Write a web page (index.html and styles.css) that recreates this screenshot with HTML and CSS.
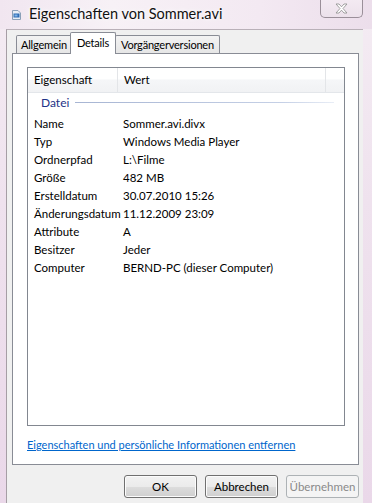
FILE: index.html
```html
<!DOCTYPE html>
<html lang="de">
<head>
  <meta charset="UTF-8">
  <meta name="viewport" content="width=device-width, initial-scale=1.0">
  <title>Eigenschaften von Sommer.avi</title>
  <link rel="stylesheet" href="styles.css">
</head>
<body>
  <div class="window">
    <div class="titlebar">
      <svg class="app-icon" width="9" height="10" viewBox="0 0 9 10">
        <path d="M0.5 0.5h5.5l2.5 2.5v6.5h-8z" fill="#e8eef5" stroke="#8aa0b8"/>
        <rect x="1.5" y="3.5" width="6" height="4" fill="#2f6db5"/>
        <rect x="2.5" y="4.5" width="3" height="2" fill="#7fb4e8"/>
      </svg>
      <span class="title">Eigenschaften von Sommer.avi</span>
      <div class="close-btn">
        <svg width="13" height="11" viewBox="0 0 13 11">
          <path d="M1 1h3l2.5 2.8L9 1h3L8 5.5l4 4.5H9L6.5 7.2 4 10H1l4-4.5z" fill="#fff" stroke="#8c8c8c" stroke-width="0.8" stroke-linejoin="round"/>
        </svg>
      </div>
    </div>

    <div class="dialog">
      <div class="tabs">
        <div class="tab">Allgemein</div>
        <div class="tab active">Details</div>
        <div class="tab">Vorgängerversionen</div>
      </div>

      <div class="panel">
        <div class="listview">
          <div class="lv-header">
            <div class="lv-col col-name">Eigenschaft</div>
            <div class="lv-col col-value">Wert</div>
            <div class="lv-col col-rest"></div>
          </div>
          <div class="lv-group">
            <span>Datei</span>
            <div class="group-line"></div>
          </div>
          <div class="lv-row"><span class="lbl">Name</span><span>Sommer.avi.divx</span></div>
          <div class="lv-row"><span class="lbl">Typ</span><span>Windows Media Player</span></div>
          <div class="lv-row"><span class="lbl">Ordnerpfad</span><span>L:\Filme</span></div>
          <div class="lv-row"><span class="lbl">Größe</span><span>482 MB</span></div>
          <div class="lv-row"><span class="lbl">Erstelldatum</span><span>30.07.2010 15:26</span></div>
          <div class="lv-row"><span class="lbl">Änderungsdatum</span><span>11.12.2009 23:09</span></div>
          <div class="lv-row"><span class="lbl">Attribute</span><span>A</span></div>
          <div class="lv-row"><span class="lbl">Besitzer</span><span>Jeder</span></div>
          <div class="lv-row"><span class="lbl">Computer</span><span>BERND-PC (dieser Computer)</span></div>
        </div>
        <a class="remove-link" href="#">Eigenschaften und persönliche Informationen entfernen</a>
      </div>

      <div class="buttons">
        <button class="btn">OK</button>
        <button class="btn">Abbrechen</button>
        <button class="btn" disabled>Übernehmen</button>
      </div>
    </div>
  </div>
</body>
</html>
```

FILE: styles.css
```css
/* Fenster */
body {
  margin: 0;
  width: 372px;
  height: 503px;
  overflow: hidden;
  font-family: Lato, "Noto Sans", sans-serif;
  font-size: 11.5px;
  color: #000;
  background: linear-gradient(180deg, #f4ecf3 0%, #efe2ee 40%, #ead8e9 100%);
}

.window {
  display: flex;
  flex-direction: column;
  height: 503px;
}

/* Titelleiste */
.titlebar {
  flex-shrink: 0;
  height: 29px;
  display: flex;
  align-items: flex-start;
  background: linear-gradient(90deg, #f1e6f0 0%, #f7f1f6 30%, #f3e9f2 70%, #ecdeeb 100%);
}

.app-icon {
  margin: 10px 0 0 12px;
}

.title {
  margin: 5px 0 0 8px;
  font-size: 14.5px;
  line-height: 18px;
  color: #111;
  text-shadow: 0 0 6px #fff, 0 0 3px #fff;
}

.close-btn {
  margin-left: auto;
  margin-right: 9px;
  width: 41px;
  height: 17px;
  border: 1px solid #9a8f99;
  border-top: none;
  border-radius: 0 0 5px 5px;
  background: linear-gradient(180deg, #f3eaf2, #ece1eb);
  display: flex;
  align-items: center;
  justify-content: center;
}

/* Dialog */
.dialog {
  flex: 1;
  min-height: 0;
  margin: 0 9px 0 6px;
  background: #f0f0f0;
  border-left: 1px solid #a69ea5;
  border-top: 1px solid #b9b0b8;
  padding: 3px 4px 0 5px;
  display: flex;
  flex-direction: column;
}

/* Registerkarten */
.tabs {
  flex-shrink: 0;
  display: flex;
  align-items: flex-end;
  height: 20px;
  margin-left: 4px;
  position: relative;
  z-index: 1;
  font-size: 11px;
  letter-spacing: -0.2px;
}

.tab {
  height: 17px;
  padding: 0 4px;
  line-height: 18px;
  border: 1px solid #898c95;
  border-bottom: none;
  margin-right: -1px;
  background: linear-gradient(180deg, #f3f3f3, #e6e6e6);
  border-radius: 2px 2px 0 0;
}

.tab.active {
  height: 21px;
  line-height: 19px;
  margin: 0 -1px -1px -1px;
  padding: 0 6px;
  background: #fff;
  position: relative;
}

.tab:last-child {
  padding: 0 5px;
}

.panel {
  flex-shrink: 0;
  height: 397px;
  overflow: hidden;
  border: 1px solid #898c95;
  background: #fff;
  padding: 13px 13px 0 14px;
}

/* Liste */
.listview {
  height: 357px;
  border: 1px solid #828790;
}

.lv-header {
  display: flex;
  height: 24px;
  border-bottom: 1px solid #e3e6ea;
  background: linear-gradient(180deg, #ffffff 0%, #ffffff 45%, #f5f6f8 50%, #f1f2f4 100%);
}

.lv-col {
  line-height: 24px;
  border-right: 1px solid #e3e5e8;
}

.col-name {
  width: 83px;
  padding-left: 6px;
}

.col-value {
  width: 201px;
  padding-left: 6px;
}

.col-rest {
  flex: 1;
  border-right: none;
}

.lv-group {
  display: flex;
  align-items: center;
  height: 18px;
  padding: 0 10px 3px 13px;
  color: #1e3287;
  font-size: 12px;
}

.group-line {
  flex: 1;
  height: 1px;
  margin-left: 6px;
  margin-top: 1px;
  background: linear-gradient(90deg, #a7b5d3, #c5d0e6 80%, #e8edf6);
}

.lv-row {
  display: flex;
  height: 18px;
  line-height: 19px;
  padding-left: 6px;
}

.lbl {
  width: 89px;
}

/* Link */
.remove-link {
  display: inline-block;
  margin-top: 11px;
  color: #0066cc;
  font-size: 11px;
  line-height: 16px;
  white-space: nowrap;
}

/* Schaltflächen */
.buttons {
  flex-shrink: 0;
  display: flex;
  justify-content: flex-end;
  gap: 8px;
  margin-top: 10px;
}

.btn {
  width: 73px;
  height: 23px;
  padding: 0;
  font-family: inherit;
  font-size: 11.5px;
  color: #000;
  border: 1px solid #707070;
  border-radius: 3px;
  background: linear-gradient(180deg, #f2f2f2 0%, #ebebeb 50%, #dddddd 51%, #cfcfcf 100%);
  box-shadow: inset 0 0 0 1px #fcfcfc;
}

.btn:disabled {
  color: #8a8a8a;
  border-color: #adb2b5;
  background: #f4f4f4;
  box-shadow: none;
}
```
